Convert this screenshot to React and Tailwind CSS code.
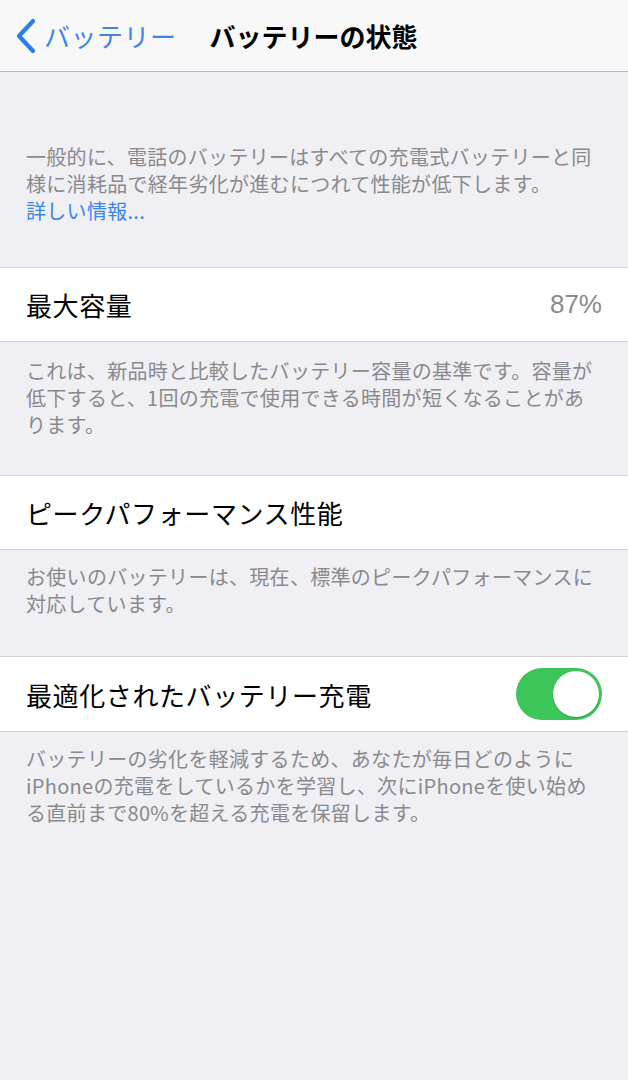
export default function App() {
  const font = { fontFamily: '"Noto Sans CJK JP", "Noto Sans", sans-serif' };

  return (
    <div className="min-h-[1080px] w-[628px] bg-[#efeff4]" style={font}>
      {/* nav bar */}
      <div className="h-[72px] bg-[#f8f8f8] border-b border-[#b8b8bc] flex items-center">
        <div className="flex items-center pl-[14px]">
          <svg width="24" height="36" viewBox="0 0 24 36" className="mr-[6px]">
            <path d="M19 3 L5 18 L19 33" fill="none" stroke="#2a7df0" strokeWidth="4.2" strokeLinecap="round" strokeLinejoin="round" />
          </svg>
          <span className="text-[26px] text-[#3d86f0] leading-none tracking-[0.5px]">バッテリー</span>
        </div>
        <span className="ml-[33px] text-[26px] font-bold text-black leading-none">バッテリーの状態</span>
      </div>

      {/* intro */}
      <div className="pt-[71px] px-[26px] pb-[43px] text-[20px] leading-[27px] text-[#8a8a8e] tracking-[0.3px]">
        一般的に、電話のバッテリーはすべての充電式バッテリーと同<br />
        様に消耗品で経年劣化が進むにつれて性能が低下します。<br />
        <span className="text-[#3a85ee]">詳しい情報...</span>
      </div>

      {/* max capacity */}
      <div className="bg-white border-y border-[#d3d3d7] h-[75px] flex items-center justify-between px-[26px]">
        <span className="text-[26px] text-black tracking-[0.6px]">最大容量</span>
        <span className="text-[26px] text-[#8a8a8e]" style={{ fontFamily: '"Liberation Sans", sans-serif' }}>87%</span>
      </div>
      <div className="pt-[15px] px-[26px] pb-[37px] text-[20px] leading-[27px] text-[#8a8a8e] tracking-[0.3px]">
        これは、新品時と比較したバッテリー容量の基準です。容量が<br />
        低下すると、1回の充電で使用できる時間が短くなることがあ<br />
        ります。
      </div>

      {/* peak performance */}
      <div className="bg-white border-y border-[#d3d3d7] h-[75px] flex items-center px-[26px]">
        <span className="text-[26px] text-black tracking-[0.6px]">ピークパフォーマンス性能</span>
      </div>
      <div className="pt-[13px] px-[26px] pb-[39px] text-[20px] leading-[27px] text-[#8a8a8e] tracking-[0.3px]">
        お使いのバッテリーは、現在、標準のピークパフォーマンスに<br />
        対応しています。
      </div>

      {/* optimized charging */}
      <div className="bg-white border-y border-[#d3d3d7] h-[76px] flex items-center justify-between px-[26px]">
        <span className="text-[26px] text-black tracking-[0.6px]">最適化されたバッテリー充電</span>
        <div className="w-[86px] h-[52px] rounded-full bg-[#3dc55a] flex items-center justify-end p-[3px]">
          <div className="w-[46px] h-[46px] rounded-full bg-white shadow-[0_1px_2px_rgba(0,0,0,0.2)]" />
        </div>
      </div>
      <div className="pt-[13px] px-[26px] pb-[40px] text-[20px] leading-[27px] text-[#8a8a8e] tracking-[0.3px]">
        バッテリーの劣化を軽減するため、あなたが毎日どのように<br />
        iPhoneの充電をしているかを学習し、次にiPhoneを使い始め<br />
        る直前まで80%を超える充電を保留します。
      </div>
    </div>
  );
}
